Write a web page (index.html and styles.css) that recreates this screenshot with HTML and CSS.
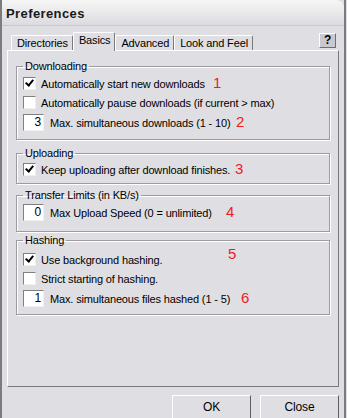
FILE: index.html
```html
<!DOCTYPE html>
<html lang="en">
<head>
    <meta charset="UTF-8">
    <title>Preferences</title>
    <link rel="stylesheet" href="styles.css">
</head>
<body>
<div class="window">
    <div class="titlebar">Preferences</div>

    <div class="tabrow">
        <div class="tabs">
            <div class="tab">Directories</div>
            <div class="tab selected">Basics</div>
            <div class="tab">Advanced</div>
            <div class="tab">Look and Feel</div>
        </div>
        <div class="help">?</div>
    </div>

    <div class="panel">
        <fieldset class="group g-download">
            <legend>Downloading</legend>
            <div class="row first">
                <span class="check on"></span>
                <span class="label">Automatically start new downloads</span>
                <span class="num n1">1</span>
            </div>
            <div class="row">
                <span class="check"></span>
                <span class="label">Automatically pause downloads (if current &gt; max)</span>
            </div>
            <div class="row field">
                <span class="spin">3</span>
                <span class="label">Max. simultaneous downloads (1 - 10)</span>
                <span class="num n2">2</span>
            </div>
        </fieldset>

        <fieldset class="group g-upload">
            <legend>Uploading</legend>
            <div class="row">
                <span class="check on"></span>
                <span class="label">Keep uploading after download finishes.</span>
                <span class="num n3">3</span>
            </div>
        </fieldset>

        <fieldset class="group g-limit">
            <legend>Transfer Limits (in KB/s)</legend>
            <div class="row field">
                <span class="spin">0</span>
                <span class="label">Max Upload Speed (0 = unlimited)</span>
                <span class="num n4">4</span>
            </div>
        </fieldset>

        <fieldset class="group g-hash">
            <legend>Hashing</legend>
            <div class="row first">
                <span class="check on"></span>
                <span class="label">Use background hashing.</span>
                <span class="num n5">5</span>
            </div>
            <div class="row">
                <span class="check"></span>
                <span class="label">Strict starting of hashing.</span>
            </div>
            <div class="row field">
                <span class="spin">1</span>
                <span class="label">Max. simultaneous files hashed (1 - 5)</span>
                <span class="num n6">6</span>
            </div>
        </fieldset>
    </div>

    <div class="buttons">
        <div class="button">OK</div>
        <div class="button">Close</div>
    </div>
</div>
</body>
</html>
```

FILE: styles.css
```css
body {
    margin: 0;
    background: #dfdfe3;
    font-family: "Liberation Sans", Arial, sans-serif;
    font-size: 11px;
    letter-spacing: -0.15px;
    color: #000;
}
.window {
    width: 346px;
    height: 418px;
    background: #dfdfe3;
    border-left: 2px solid #7c7c80;
    border-right: 2px solid #7c7c80;
    box-sizing: border-box;
    overflow: hidden;
}
.titlebar {
    height: 25px;
    line-height: 27px;
    margin-left: -2px;
    padding-left: 6px;
    font-weight: bold;
    font-size: 13px;
    letter-spacing: 0.4px;
    color: #1a1a1a;
    background: linear-gradient(#f6f6f6, #dcdce0);
    border-top-right-radius: 8px;
    border-bottom: 1px solid #c8c8cc;
}
.tabrow {
    display: flex;
    justify-content: space-between;
    align-items: flex-end;
    height: 24px;
    padding: 0 8px 0 9px;
}
.tabs {
    display: flex;
    align-items: flex-end;
}
.tab {
    height: 14px;
    line-height: 15px;
    padding: 0 4px 0 5px;
    border: 1px solid #fff;
    border-right-color: #7a7a7a;
    border-bottom: none;
    border-radius: 2px 2px 0 0;
}
.tab.selected {
    height: 18px;
    margin-bottom: -1px;
    line-height: 14px;
    background: #dfdfe3;
    position: relative;
    z-index: 1;
}
.help {
    width: 15px;
    height: 13px;
    margin-bottom: 2px;
    line-height: 13px;
    text-align: center;
    font-weight: bold;
    font-size: 12px;
    background: #c8c8d0;
    border: 1px solid;
    border-color: #fff #6f6f6f #6f6f6f #fff;
}
.panel {
    height: 337px;
    margin: 0 5px 0 5px;
    padding: 9px 8px 0 8px;
    border: 1px solid;
    border-color: #fff #7a7a7a #7a7a7a #fff;
    box-sizing: border-box;
}
.group {
    box-sizing: border-box;
    margin: 0;
    padding: 0 6px;
    border: 1px solid #9c9ca0;
    box-shadow: inset 1px 1px 0 #fff, 1px 1px 0 #fff;
}
.group legend {
    padding: 0 2px;
    margin-left: 0;
    height: 13px;
    line-height: 13px;
}
.g-download { height: 80px; margin-bottom: 7px; }
.g-upload { height: 37px; margin-bottom: 5px; }
.g-limit { height: 43px; margin-bottom: 2px; }
.g-hash { height: 81px; }
.g-download .row.first { margin-top: 1px; }
.g-hash .row.first { margin-top: 3px; }
.row {
    position: relative;
    display: flex;
    align-items: center;
    height: 19px;
}
.row.field {
    height: 19px;
    margin-top: 1px;
}
.check {
    width: 11px;
    height: 11px;
    margin-right: 5px;
    background: #fff;
    border: 1px solid;
    border-color: #808080 #f0f0f0 #f0f0f0 #808080;
    position: relative;
}
.check.on::after {
    content: "";
    position: absolute;
    left: 3px;
    top: 0px;
    width: 3px;
    height: 6px;
    border: solid #000;
    border-width: 0 2px 2px 0;
    transform: rotate(40deg);
}
.spin {
    width: 17px;
    height: 15px;
    line-height: 15px;
    padding-right: 2px;
    text-align: right;
    background: #fff;
    border: 1px solid;
    border-color: #808080 #f0f0f0 #f0f0f0 #808080;
    margin-right: 6px;
    font-size: 12px;
}
.label {
    white-space: nowrap;
}
/* red annotation numbers drawn over the dialog */
.num {
    position: absolute;
    top: 0;
    line-height: 17px;
    color: #ee1c1c;
    font-size: 15px;
    letter-spacing: 0;
}
.n1 { left: 190px; }
.n2 { left: 213px; }
.n3 { left: 212px; }
.n4 { left: 203px; }
.n5 { left: 205px; top: -5px; }
.n6 { left: 218px; }
.buttons {
    display: flex;
    justify-content: flex-end;
    gap: 9px;
    padding: 8px 5px 0 0;
}
.button {
    width: 77px;
    height: 22px;
    line-height: 22px;
    text-align: center;
    border: 1px solid;
    border-color: #fff #606060 #606060 #fff;
    font-size: 12px;
}
```
